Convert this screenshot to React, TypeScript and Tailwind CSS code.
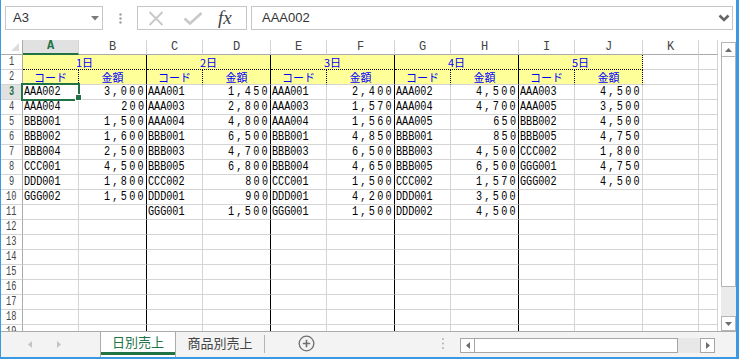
import React from "react";

const days: string[][][] = [
  [["AAA002","3,000"],["AAA004","200"],["BBB001","1,500"],["BBB002","1,600"],["BBB004","2,500"],["CCC001","4,500"],["DDD001","1,800"],["GGG002","1,500"]],
  [["AAA001","1,450"],["AAA003","2,800"],["AAA004","4,800"],["BBB001","6,500"],["BBB003","4,700"],["BBB005","6,800"],["CCC002","800"],["DDD001","900"],["GGG001","1,500"]],
  [["AAA001","2,400"],["AAA003","1,570"],["AAA004","1,560"],["BBB001","4,850"],["BBB003","6,500"],["BBB004","4,650"],["CCC001","1,500"],["DDD001","4,200"],["GGG001","1,500"]],
  [["AAA002","4,500"],["AAA004","4,700"],["AAA005","650"],["BBB001","850"],["BBB003","4,500"],["BBB005","6,500"],["CCC002","1,570"],["DDD001","3,500"],["DDD002","4,500"]],
  [["AAA003","4,500"],["AAA005","3,500"],["BBB002","4,500"],["BBB005","4,750"],["CCC002","1,800"],["GGG001","4,750"],["GGG002","4,500"]],
];

const letters = ["A","B","C","D","E","F","G","H","I","J","K",""];
const base = "h-[15px] border-r border-b overflow-hidden whitespace-nowrap leading-[14px]";
const mono = "font-['Liberation_Mono',monospace]";
const cjk = "font-['Noto_Sans_CJK_JP',sans-serif]";

function RowHead({ n, sel }: { n: number; sel?: boolean }) {
  return (
    <div
      className={
        sel
          ? `${base} border-r-[#217346] border-b-[#d4d4d4] bg-[#e1e1e1] flex items-center justify-center text-[#217346] font-bold`
          : `${base} border-r-[#ababab] border-b-[#d4d4d4] bg-white flex items-center justify-center text-[#444]`
      }
    >
      <span className={`inline-block scale-x-[0.72] ${mono} text-[12px] leading-[14px]`}>{n}</span>
    </div>
  );
}

function Code({ v }: { v?: string }) {
  return (
    <div className={`${base} border-r-[#d4d4d4] border-b-[#d4d4d4] pl-[1px] text-black flex items-center`}>
      {v && (
        <span className={`inline-block origin-left scale-x-[0.78] ${mono} text-[13px] leading-[14px]`}>{v}</span>
      )}
    </div>
  );
}

function Amount({ v, black }: { v?: string; black: boolean }) {
  return (
    <div
      className={
        black
          ? `${base} border-r-black border-b-[#d4d4d4] flex items-center justify-end text-black`
          : `${base} border-r-[#d4d4d4] border-b-[#d4d4d4] flex items-center justify-end text-black`
      }
    >
      {v && (
        <span className={`inline-block origin-right scale-x-[0.78] tracking-[3px] ${mono} text-[13px] leading-[14px]`}>{v}</span>
      )}
    </div>
  );
}

function Plain() {
  return <div className={`${base} border-r-[#d4d4d4] border-b-[#d4d4d4]`} />;
}

function Grid() {
  const cells: React.ReactNode[] = [];
  cells.push(
    <div key="corner" className={`${base} relative border-r-[#ababab] border-b-[#ababab] bg-white`}>
      <svg className="absolute left-0 top-0" width="22" height="15">
        <polygon points="18,3 18,11 10,11" fill="#dcdcdc" />
      </svg>
    </div>
  );
  letters.forEach((l, i) => {
    cells.push(
      i === 0 ? (
        <div key={"h" + i} className="h-[15px] border-r border-b-2 border-r-[#d4d4d4] border-b-[#217346] bg-[#e1e1e1] flex items-center justify-center text-[#217346] font-bold">
          <span className={`${mono} text-[12px] leading-[13px]`}>{l}</span>
        </div>
      ) : (
        <div key={"h" + i} className={`${base} border-r-[#d4d4d4] border-b-[#ababab] bg-white flex items-center justify-center text-[#444]`}>
          <span className={`${mono} text-[12px] leading-[14px]`}>{l}</span>
        </div>
      )
    );
  });
  cells.push(<RowHead key="r1" n={1} />);
  for (let g = 0; g < 5; g++) {
    cells.push(
      <div
        key={"m" + g}
        className={
          g < 4
            ? `col-span-2 ${base} bg-[#ffff99] border-r-black border-b-black [border-bottom-style:dotted] flex items-center justify-center text-[#0000ff]`
            : `col-span-2 ${base} bg-[#ffff99] border-r-black [border-right-style:dotted] border-b-black [border-bottom-style:dotted] flex items-center justify-center text-[#0000ff]`
        }
      >
        <span className={`${cjk} text-[11px] leading-[14px]`}>{g + 1}日</span>
      </div>
    );
  }
  cells.push(<Plain key="r1k" />, <Plain key="r1l" />);
  cells.push(<RowHead key="r2" n={2} />);
  for (let g = 0; g < 5; g++) {
    cells.push(
      <div key={"c" + g} className={`${base} bg-[#ffff99] border-r-black [border-right-style:dotted] border-b-[#d4d4d4] flex items-center justify-center text-[#0000ff]`}>
        <span className={`${cjk} text-[11px] leading-[14px]`}>コード</span>
      </div>
    );
    cells.push(
      <div
        key={"a" + g}
        className={
          g < 4
            ? `${base} bg-[#ffff99] border-r-black border-b-[#d4d4d4] flex items-center justify-center text-[#0000ff]`
            : `${base} bg-[#ffff99] border-r-black [border-right-style:dotted] border-b-[#d4d4d4] flex items-center justify-center text-[#0000ff]`
        }
      >
        <span className={`${cjk} text-[11px] leading-[14px]`}>金額</span>
      </div>
    );
  }
  cells.push(<Plain key="r2k" />, <Plain key="r2l" />);
  for (let r = 3; r <= 19; r++) {
    const i = r - 3;
    cells.push(<RowHead key={"r" + r} n={r} sel={r === 3} />);
    for (let g = 0; g < 5; g++) {
      const d = days[g][i];
      cells.push(<Code key={`c${r}-${g}`} v={d ? d[0] : undefined} />);
      cells.push(<Amount key={`a${r}-${g}`} v={d ? d[1] : undefined} black={g < 4} />);
    }
    cells.push(<Plain key={`k${r}`} />, <Plain key={`l${r}`} />);
  }
  return (
    <div className="relative w-[717px] h-full overflow-hidden">
      <div className="grid grid-cols-[22px_56px_68px_56px_68px_56px_68px_56px_68px_56px_68px_56px_19px]">
        {cells}
      </div>
      <div className="absolute left-[20px] top-[43px] w-[59px] h-[18px] border-2 border-[#217346]" />
      <div className="absolute left-[74px] top-[54px] w-[7px] h-[7px] bg-[#217346] border border-white" />
    </div>
  );
}

function VScroll() {
  return (
    <div className="w-[18px] h-full pl-[3px] pt-[2px] flex flex-col">
      <div className="w-[15px] h-[15px] border border-[#b4b4b4] bg-white flex items-center justify-center">
        <svg width="7" height="4"><polygon points="0,4 7,4 3.5,0" fill="#6e6e6e" /></svg>
      </div>
      <div className="w-[15px] h-[230px] border border-t-0 border-[#b4b4b4] bg-white" />
      <div className="w-[15px] h-[29px] bg-[#ebebeb]" />
      <div className="w-[15px] h-[15px] border border-[#b4b4b4] bg-white flex items-center justify-center">
        <svg width="7" height="4"><polygon points="0,0 7,0 3.5,4" fill="#6e6e6e" /></svg>
      </div>
    </div>
  );
}

function TabBar() {
  return (
    <div className="h-[26px] shrink-0 border-t border-t-[#ababab] bg-[#f3f3f3] flex">
      <div className="w-[99px] flex items-center">
        <svg className="ml-[27px]" width="4" height="7"><polygon points="4,0 4,7 0,3.5" fill="#c4c4c4" /></svg>
        <svg className="ml-[25px]" width="4" height="7"><polygon points="0,0 0,7 4,3.5" fill="#c4c4c4" /></svg>
      </div>
      <div className="w-[76px] bg-white border-l border-r border-l-[#ababab] border-r-[#ababab] flex flex-col">
        <div className={`flex-1 flex items-center justify-center ${cjk} text-[13px] text-[#217346]`}>日別売上</div>
        <div className="h-[3px] bg-[#217346]" />
        <div className="h-[2px]" />
      </div>
      <div className={`w-[88px] flex items-center justify-center ${cjk} text-[13px] text-[#444] pb-[3px]`}>商品別売上</div>
      <div className="w-px h-[18px] mt-[3px] bg-[#b4b4b4]" />
      <div className="ml-[33px] flex items-center pb-[2px]">
        <svg width="17" height="17" viewBox="0 0 17 17">
          <circle cx="8.5" cy="8.5" r="7.3" fill="none" stroke="#6f6f6f" strokeWidth="1.3" />
          <path d="M8.5 4.8 V12.2 M4.8 8.5 H12.2" stroke="#6f6f6f" strokeWidth="1.6" />
        </svg>
      </div>
      <div className="ml-[127px] flex items-center pb-[2px]">
        <svg width="2" height="11"><circle cx="1" cy="1" r="1" fill="#b0b0b0" /><circle cx="1" cy="5.5" r="1" fill="#b0b0b0" /><circle cx="1" cy="10" r="1" fill="#b0b0b0" /></svg>
      </div>
      <div className="ml-[16px] mt-[6px] h-[15px] flex">
        <div className="w-[15px] h-[15px] border border-[#a6a6a6] bg-white flex items-center justify-center">
          <svg width="4" height="7"><polygon points="4,0 4,7 0,3.5" fill="#6e6e6e" /></svg>
        </div>
        <div className="w-[203px] h-[15px] border border-l-0 border-[#a6a6a6] bg-white" />
        <div className="w-[22px] h-[15px] bg-[#e8e8e8]" />
        <div className="w-[15px] h-[15px] border border-[#a6a6a6] bg-white flex items-center justify-center">
          <svg width="4" height="7"><polygon points="0,0 0,7 4,3.5" fill="#6e6e6e" /></svg>
        </div>
      </div>
    </div>
  );
}

export default function App() {
  return (
    <div className="w-[739px] h-[359px] bg-white border-l border-r-[3px] border-b-2 border-l-[#3a99e2] border-r-[#3a99e2] border-b-[#3a99e2] flex flex-col overflow-hidden font-['Liberation_Sans',sans-serif]">
      <div className="h-[40px] shrink-0 flex pt-[6px] pl-[4px]">
        <div className="w-[98px] h-[24px] border border-[#c6c6c6] flex items-center justify-between pl-[7px] pr-[3px]">
          <span className="text-[13px] text-[#333]">A3</span>
          <svg width="8" height="5"><polygon points="0,0 8,0 4,4.5" fill="#7a7a7a" /></svg>
        </div>
        <div className="w-[34px] h-[24px] flex items-center justify-center">
          <svg width="3" height="11"><circle cx="1.5" cy="1.5" r="1.2" fill="#a0a0a0" /><circle cx="1.5" cy="5.5" r="1.2" fill="#a0a0a0" /><circle cx="1.5" cy="9.5" r="1.2" fill="#a0a0a0" /></svg>
        </div>
        <div className="w-[110px] h-[24px] border border-[#c6c6c6] flex items-center">
          <svg className="ml-[10px]" width="16" height="15" viewBox="0 0 16 15">
            <path d="M1.5 1 L14.5 14 M14.5 1 L1.5 14" stroke="#c8c8c8" strokeWidth="2" />
          </svg>
          <svg className="ml-[19px]" width="20" height="13" viewBox="0 0 20 13">
            <path d="M1.5 6.5 L7 11.5 L18.5 1" fill="none" stroke="#c8c8c8" strokeWidth="2.6" />
          </svg>
          <span className="ml-[15px] italic font-['Liberation_Serif',serif] text-[19px] leading-[20px] text-[#444]">fx</span>
        </div>
        <div className="ml-[4px] w-[482px] h-[24px] border border-[#c6c6c6] flex items-center justify-between pl-[10px] pr-[2px]">
          <span className="text-[13px] text-[#333]">AAA002</span>
          <svg width="12" height="8" viewBox="0 0 12 8">
            <path d="M1.5 1.5 L6 6 L10.5 1.5" fill="none" stroke="#666" strokeWidth="2.6" />
          </svg>
        </div>
      </div>
      <div className="flex h-[291px] shrink-0">
        <Grid />
        <VScroll />
      </div>
      <TabBar />
    </div>
  );
}
